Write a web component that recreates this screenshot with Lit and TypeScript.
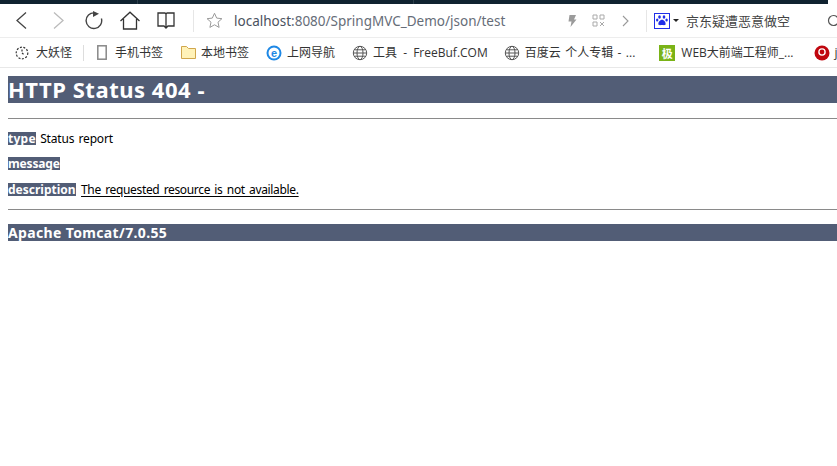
import { LitElement, html, css, svg } from "lit";
import { customElement } from "lit/decorators.js";

const globe = svg`<svg class="ic" width="16" height="16" viewBox="0 0 16 16" fill="none" stroke="#555" stroke-width="1"><circle cx="8" cy="8" r="6.7"/><ellipse cx="8" cy="8" rx="3" ry="6.7"/><path d="M1.500 8h13M2.500 4.800h11M2.500 11.200h11"/></svg>`;

@customElement("app-root")
export class AppRoot extends LitElement {
  static styles = css`
    :host { display: block; width: 837px; height: 466px; overflow: hidden; background: #fff; font-family: "Noto Sans CJK SC", sans-serif; }
    .strip { height: 4px; width: 828px; background:
      linear-gradient(#2c3e4a, #2c3e4a) 137px 0 / 1px 100% no-repeat,
      linear-gradient(#2c3e4a, #2c3e4a) 413px 0 / 1px 100% no-repeat,
      #0f2230; }
    .toolbar { height: 34px; display: flex; align-items: center; box-sizing: border-box; color: #333; border-bottom: 1px solid #ededed; }
    .btn { display: flex; flex: none; }
    .back { margin-left: 14px; }
    .fwd { margin-left: 20px; }
    .reload { margin-left: 19px; }
    .home { margin-left: 17px; }
    .read { margin-left: 17px; }
    .sep { width: 1px; height: 22px; background: #e6e6e6; flex: none; }
    .sep.a { margin-left: 18px; }
    .star { margin-left: 12px; display: flex; }
    .url { margin-left: 11px; font: 13.5px/18px "Noto Sans", sans-serif; color: #666d78; white-space: nowrap; width: 332px; flex: none; }
    .url b { font-weight: 400; color: #4a5260; }
    .bolt { display: flex; }
    .qr { display: flex; margin-left: 14px; }
    .chev { display: flex; margin-left: 16px; }
    .sep.b { margin-left: 16px; }
    .baidu { margin-left: 7px; display: flex; }
    .caret { width: 0; height: 0; border: 3px solid transparent; border-top: 3px solid #222; border-bottom: 0; margin-left: 3px; }
    .search { margin-left: 7px; font: 13px/18px "Noto Sans CJK SC", sans-serif; color: #444; white-space: nowrap; width: 141px; flex: none; }
    .mag { display: flex; }
    .marks { height: 30px; display: flex; align-items: center; box-sizing: border-box; border-bottom: 1px solid #e8e8e8; font: 12px/16px "Open Sans", "Noto Sans CJK SC", sans-serif; color: #333; white-space: nowrap; overflow: hidden; }
    .m { display: flex; align-items: center; flex: none; gap: 5px; }
    .ic { flex: none; display: block; }
    .mk1 { margin-left: 15px; gap: 7px; }
    .vs { width: 1px; height: 16px; background: #ddd; margin-left: 11px; flex: none; }
    .mk2 { margin-left: 13px; gap: 8px; }
    .mk3 { margin-left: 18px; }
    .mk4 { margin-left: 17px; }
    .mk5 { margin-left: 17px; word-spacing: 3px; }
    .mk6 { margin-left: 16px; word-spacing: 1.3px; }
    .mk7 { margin-left: 24px; gap: 6px; }
    .mk8 { margin-left: 20px; }
    .ji { width: 16px; height: 16px; background: #7ab317; color: #fff; font: bold 11px/16px "Noto Sans CJK SC", sans-serif; text-align: center; flex: none; }
    main { padding: 8px 0 8px 8px; font-family: "Noto Sans", sans-serif; color: #000; }
    h1 { margin: 0; height: 27px; background: #525d76; color: #fff; font: bold 22px/27px "Noto Sans", sans-serif; letter-spacing: 0.53px; white-space: nowrap; }
    hr { margin: 15px 0 0; height: 1px; border: 0; background: #8a8a8a; }
    p { margin: 0; font-size: 12px; line-height: 13px; height: 13px; white-space: nowrap; word-spacing: 1.5px; letter-spacing: -0.2px; }
    .p1 { margin-top: 13px; }
    .p2 { margin-top: 12px; }
    .p3 { margin-top: 13px; }
    p b { display: inline-block; height: 13px; line-height: 13px; vertical-align: top; background: #525d76; color: #fff; letter-spacing: 0; }
    p b.t { letter-spacing: 0.25px; }
    p b.g { letter-spacing: -0.15px; }
    p u { text-underline-offset: 2px; letter-spacing: -0.34px; margin-left: 1px; }
    hr.h2 { margin-top: 13px; }
    h3 { margin: 14px 0 0; height: 17px; background: #525d76; color: #fff; font: bold 14px/17px "Noto Sans", sans-serif; letter-spacing: 0.35px; white-space: nowrap; }
  `;

  render() {
    return html`
      <div class="strip"></div>
      <div class="toolbar">
        <span class="btn back"><svg width="16" height="20" viewBox="0 0 16 20" fill="none" stroke="#444" stroke-width="1.3"><path d="M12 1.500 3 9.500l9 8"/></svg></span>
        <span class="btn fwd"><svg width="16" height="20" viewBox="0 0 16 20" fill="none" stroke="#bbb" stroke-width="1.3"><path d="M4 1.500l9 8-9 8"/></svg></span>
        <span class="btn reload"><svg width="18" height="20" viewBox="0 0 18 20" fill="none" stroke="#444" stroke-width="1.4"><path d="M9.500 1.900A7.800 7.800 0 1 0 16.400 7.500"/><path d="M8 0l6 2.800L8 6z" fill="#444" stroke="none"/></svg></span>
        <span class="btn home"><svg width="20" height="20" viewBox="0 0 20 20" fill="none" stroke="#333" stroke-width="1.3"><path d="M0.500 10 10 1.200l9.500 8.800M3.500 8v10h13V8"/></svg></span>
        <span class="btn read"><svg width="18" height="18" viewBox="0 0 18 18" fill="none" stroke="#333" stroke-width="1.300"><path d="M1 1h7l1 1 1-1h7v13h-6l-2 2-2-2H1zM9 2v14"/></svg></span>
        <span class="sep a"></span>
        <span class="star"><svg width="17" height="17" viewBox="0 0 17 17" fill="none" stroke="#9a9a9a" stroke-width="1"><path d="M8.500 1.300l2.200 4.800 5.200.6-3.900 3.500 1.100 5.200-4.600-2.600-4.600 2.600 1.100-5.200L1.100 6.700l5.200-.6z"/></svg></span>
        <span class="url"><b>localhost</b>:8080/SpringMVC_Demo/json/test</span>
        <span class="bolt"><svg width="12" height="14" viewBox="0 0 12 14" fill="#9b9b9b"><path d="M3.500 1h6.500L8 5.500h2.500L4.500 13l1-5.500H2.500z"/></svg></span>
        <span class="qr"><svg width="13" height="13" viewBox="0 0 13 13" fill="none" stroke="#aaa" stroke-width="1"><path d="M1 1h4v4H1zM8 1h4v4H8zM1 8h4v4H1zM8 8l4 4M12 8l-4 4"/></svg></span>
        <span class="chev"><svg width="9" height="12" viewBox="0 0 9 12" fill="none" stroke="#999" stroke-width="1.100"><path d="M2 1l5 5-5 5"/></svg></span>
        <span class="sep b"></span>
        <span class="baidu"><svg width="16" height="16" viewBox="0 0 16 16"><rect width="16" height="16" fill="#1f2ee8"/><rect x="1" y="1" width="14" height="14" fill="#fff"/><g fill="#1f2ee8"><ellipse cx="5.500" cy="4" rx="1.300" ry="1.800"/><ellipse cx="10" cy="4" rx="1.300" ry="1.800"/><ellipse cx="3.200" cy="7" rx="1.200" ry="1.600"/><ellipse cx="12.600" cy="7" rx="1.200" ry="1.600"/><path d="M8 6.800c2 0 4 2.600 3.600 4.500-.3 1.300-2 .8-3.600.8s-3.300.5-3.600-.8C4 9.400 6 6.800 8 6.800z"/></g></svg></span>
        <span class="caret"></span>
        <span class="search">京东疑遭恶意做空</span>
        <span class="mag"><svg width="10" height="14" viewBox="0 0 10 14" fill="none" stroke="#555" stroke-width="1.200"><circle cx="6.500" cy="6.500" r="5"/></svg></span>
      </div>
      <div class="marks">
        <span class="m mk1"><svg class="ic" width="14" height="14" viewBox="0 0 14 14" fill="none" stroke="#333" stroke-width="1.200" stroke-dasharray="2 1.500"><circle cx="7" cy="7" r="5.800"/><path d="M7 3.500V7l2.500 2"/></svg><span>大妖怪</span></span>
        <span class="vs"></span>
        <span class="m mk2"><svg class="ic" width="10" height="15" viewBox="0 0 10 15" fill="none" stroke="#888" stroke-width="1.500"><rect x="0.800" y="0.800" width="8.400" height="13.400"/></svg><span>手机书签</span></span>
        <span class="m mk3"><svg class="ic" width="15" height="13" viewBox="0 0 15 13" fill="#fff2b8" stroke="#d0a64c"><path d="M0.500 12.500V0.500h5l2 2h7v10z"/></svg><span>本地书签</span></span>
        <span class="m mk4"><svg class="ic" width="16" height="16" viewBox="0 0 16 16"><circle cx="8" cy="8" r="7.500" fill="#1e88e5"/><circle cx="8" cy="8" r="5.500" fill="#fff"/><text x="8" y="11.500" text-anchor="middle" font-family="Liberation Sans" font-weight="700" font-size="11" fill="#1e88e5">e</text></svg><span>上网导航</span></span>
        <span class="m mk5">${globe}<span>工具 - FreeBuf.COM</span></span>
        <span class="m mk6">${globe}<span>百度云 个人专辑 - ...</span></span>
        <span class="m mk7"><span class="ji">极</span><span>WEB大前端工程师_...</span></span>
        <span class="m mk8"><svg class="ic" width="16" height="16" viewBox="0 0 16 16"><circle cx="8" cy="8" r="7.500" fill="#c0070f"/><circle cx="8" cy="7" r="3.800" fill="#fff"/><circle cx="8" cy="7" r="2.400" fill="#c0070f"/></svg><span>j</span></span>
      </div>
      <main>
        <h1>HTTP Status 404 -</h1>
        <hr />
        <p class="p1"><b class="t">type</b> Status report</p>
        <p class="p2"><b class="g">message</b></p>
        <p class="p3"><b>description</b> <u>The requested resource is not available.</u></p>
        <hr class="h2" />
        <h3>Apache Tomcat/7.0.55</h3>
      </main>
    `;
  }
}
